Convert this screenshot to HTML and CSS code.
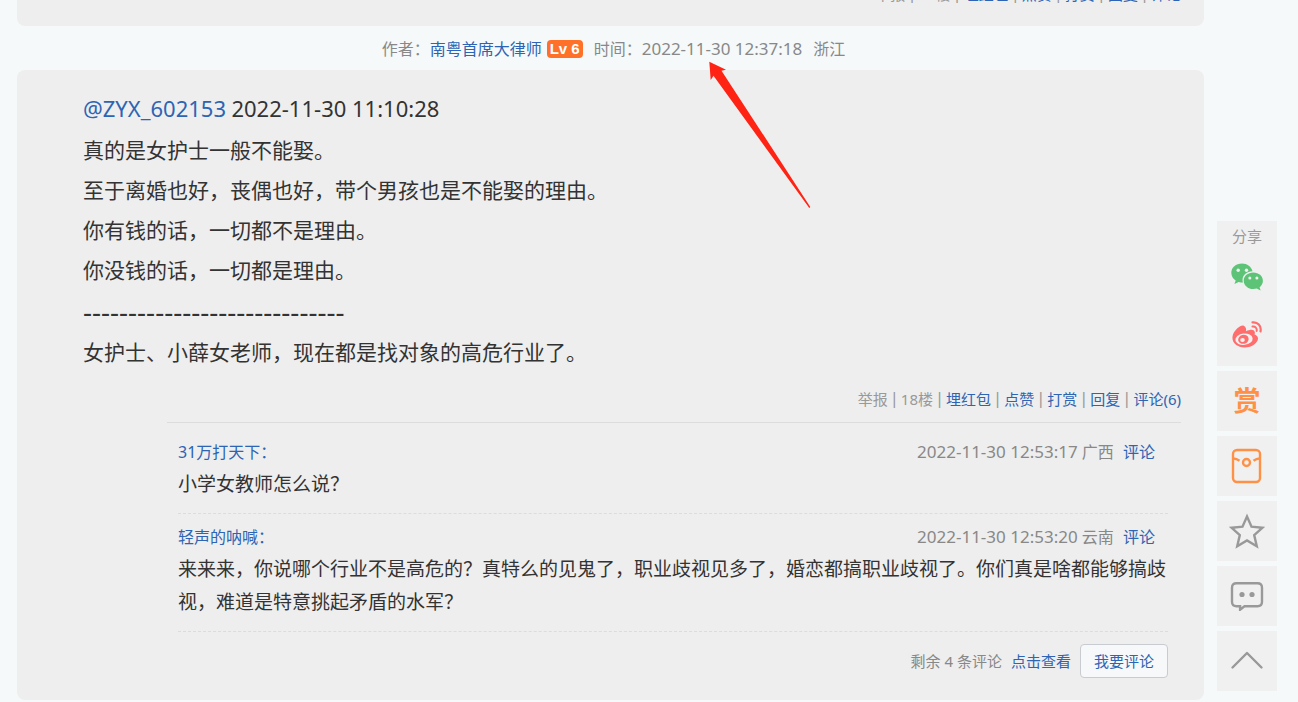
FILE: index.html
```html
<!DOCTYPE html>
<html lang="zh-CN">
<head>
<meta charset="utf-8">
<title>帖子</title>
<link rel="stylesheet" href="styles.css">
</head>
<body>
<div class="page">
  <main class="thread">
    <section class="card card-prev">
      <div class="actions">
        <span class="muted">举报</span><i>|</i><span class="muted">17楼</span><i>|</i><a href="#">埋红包</a><i>|</i><a href="#">点赞</a><i>|</i><a href="#">打赏</a><i>|</i><a href="#">回复</a><i>|</i><a href="#">评论</a>
      </div>
    </section>

    <div class="author">
      <span>作者：<a href="#">南粤首席大律师</a></span>
      <span class="level">Lv 6</span>
      <span class="posted">时间：<time>2022-11-30 12:37:18</time></span>
      <span class="region">浙江</span>
    </div>

    <article class="card">
      <div class="post">
        <p><a class="latin" href="#">@ZYX_602153</a> <time>2022-11-30 11:10:28</time></p>
        <p>真的是女护士一般不能娶。<br>至于离婚也好，丧偶也好，带个男孩也是不能娶的理由。<br>你有钱的话，一切都不是理由。<br>你没钱的话，一切都是理由。</p>
        <p class="dashes">-----------------------------</p>
        <p>女护士、小薛女老师，现在都是找对象的高危行业了。</p>
      </div>
      <div class="actions">
        <span class="muted">举报</span><i>|</i><span class="muted">18楼</span><i>|</i><a href="#">埋红包</a><i>|</i><a href="#">点赞</a><i>|</i><a href="#">打赏</a><i>|</i><a href="#">回复</a><i>|</i><a href="#">评论(6)</a>
      </div>
      <div class="comments">
        <div class="comment">
          <div class="comment-head">
            <a href="#">31万打天下：</a>
            <span class="comment-info"><time>2022-11-30 12:53:17</time> 广西 <a class="reply" href="#">评论</a></span>
          </div>
          <p>小学女教师怎么说？</p>
        </div>
        <div class="comment">
          <div class="comment-head">
            <a href="#">轻声的呐喊：</a>
            <span class="comment-info"><time>2022-11-30 12:53:20</time> 云南 <a class="reply" href="#">评论</a></span>
          </div>
          <p>来来来，你说哪个行业不是高危的？真特么的见鬼了，职业歧视见多了，婚恋都搞职业歧视了。你们真是啥都能够搞歧视，难道是特意挑起矛盾的水军？</p>
        </div>
        <div class="comments-foot">
          <span>剩余 4 条评论</span>
          <a href="#">点击查看</a>
          <button type="button" class="write">我要评论</button>
        </div>
      </div>
    </article>
  </main>

  <aside class="tools">
    <div class="share">
      <span>分享</span>
      <button type="button" aria-label="微信">
        <svg width="32" height="28" viewBox="0 0 32 28">
          <path fill="#5dc477" d="M11 0.500C4.900 0.500 0.300 4.500 0.300 9.800c0 3.200 1.700 5.900 4.400 7.700L3.400 21l4.300-2.100c1.400.4 2.800.6 4.200.6A9.500 9.500 0 0 1 11.500 17c0-5 4.500-8.700 10-8.800C20.500 3.800 16.200.5 11 .5z"/>
          <path fill="#5dc477" d="M22.300 9.500c-5.400 0-9.600 3.600-9.600 8.200s4.200 8.300 9.600 8.300c1.200 0 2.400-.2 3.400-.5l3.900 2-1-3.300c2.100-1.600 3.300-3.900 3.300-6.500 0-4.600-4.200-8.200-9.600-8.200z"/>
          <g fill="#f0f0f0"><circle cx="7.200" cy="7.300" r="1.700"/><circle cx="15.500" cy="7.300" r="1.700"/><circle cx="18.800" cy="15" r="1.500"/><circle cx="25.900" cy="15" r="1.500"/></g>
        </svg>
      </button>
      <button type="button" aria-label="微博">
        <svg width="31" height="28" viewBox="0 0 31 28">
          <path fill="#ff6d6d" d="M12 5c-2.500-2-9 3.500-11 8.500C-1.500 21 4.500 26.500 12.500 26.500S26 21.500 26 17.500c0-2.200-1.700-3.300-3.500-4 .8-2.300.3-4.300-2-4.600-1.900-.3-4 .3-6.500 1.300C14.500 7.500 13.500 5.800 12 5z"/>
          <ellipse cx="12" cy="18.200" rx="8.700" ry="5.700" fill="#f0f0f0" transform="rotate(-7 12 18.200)"/>
          <ellipse cx="11.400" cy="18.300" rx="5.300" ry="4.500" fill="#ff6d6d" transform="rotate(-15 11.400 18.300)"/>
          <ellipse cx="10.500" cy="19" rx="2.300" ry="1.900" fill="#f0f0f0"/>
          <g fill="none" stroke="#ff6d6d" stroke-linecap="round"><path stroke-width="2.200" d="M20.500 1.400c5-.8 9.200 3.600 8 9"/><path stroke-width="2" d="M20.500 5.600c2.800-.4 4.700 1.700 4.200 4.300"/></g>
        </svg>
      </button>
    </div>
    <button type="button" class="tool reward">赏</button>
    <button type="button" class="tool" aria-label="红包">
      <svg width="32" height="36" viewBox="0 0 32 36" fill="none" stroke="#ff9147" stroke-width="2.400">
        <rect x="2" y="2" width="27" height="32" rx="4"/><circle cx="15.500" cy="14.500" r="3.500"/><path d="M2.500 10.500q3 0 6 2.300M28.500 10.500q-3 0-6 2.300"/>
      </svg>
    </button>
    <button type="button" class="tool" aria-label="收藏">
      <svg width="36" height="36" viewBox="0 0 36 36" fill="none" stroke="#999" stroke-width="2.400">
        <path d="M18 3.500l4.500 10.200 11 1-8.300 7.400 2.600 11.200-9.800-5.800-9.800 5.800 2.600-11.200-8.300-7.400 11-1z"/>
      </svg>
    </button>
    <button type="button" class="tool" aria-label="评论">
      <svg width="34" height="30" viewBox="0 0 34 30">
        <path fill="none" stroke="#999" stroke-width="2.400" d="M6.500 2.200h21q4.500 0 4.500 4.500v14q0 4.500-4.500 4.500h-13l-4.400 3.500v-3.500H6.500Q2 25.200 2 20.700v-14q0-4.500 4.500-4.500z"/>
        <circle cx="12" cy="13.500" r="2.600" fill="#999"/><circle cx="22" cy="13.500" r="2.600" fill="#999"/>
      </svg>
    </button>
    <button type="button" class="tool" aria-label="返回顶部">
      <svg width="34" height="20" viewBox="0 0 34 20" fill="none" stroke="#999" stroke-width="2.400" stroke-linecap="round" stroke-linejoin="round"><path d="M2.500 16.500L17 2l14.500 14.500"/></svg>
    </button>
  </aside>
</div>
<svg class="arrow" width="102" height="148" viewBox="0 0 102 148" aria-hidden="true"><path fill="#ff2314" d="M.3.7L17 8.700l-4.500 1L101.300 146l-1 .9L4.500 14.700 1.700 19z"/></svg>
</body>
</html>
```
FILE: styles.css
```css
* { box-sizing: border-box; }
body {
  margin: 0;
  background: #f5f9fa;
  color: #333;
  font: 16px/24px "Noto Sans", "Noto Sans CJK SC", sans-serif;
}
p { margin: 0; }
a { color: #2d64b3; text-decoration: none; }
button { font: inherit; cursor: pointer; }
svg { display: block; }

.page {
  display: flex;
  gap: 13px;
  padding: 0 21px 0 17px;
}
.thread { flex: 1; min-width: 0; }

.card {
  background: #eee;
  border-radius: 8px;
  padding: 18px 23px 22px 66px;
}
.card-prev {
  display: flex;
  align-items: flex-end;
  justify-content: flex-end;
  height: 26px;
  padding: 0 23px 20px;
  border-radius: 0 0 8px 8px;
  overflow: hidden;
}

.author {
  display: flex;
  align-items: center;
  justify-content: center;
  height: 44px;
  padding: 2px 0 0 6px;
  color: #888;
}
.author time, .comment-info time { font-size: 17px; }
.level {
  margin-left: 5px;
  padding: 0 3px;
  border-radius: 4px;
  background: #ff7129;
  color: #fff;
  font: bold 15px/18px "Liberation Sans", sans-serif;
}
.posted { margin-left: 11px; }
.region { margin-left: 11px; }

.post {
  display: flex;
  flex-direction: column;
  gap: 1px;
  font-size: 21px;
  line-height: 40px;
}
.post time, .latin { font-size: 22px; }
.dashes { font-size: 28px; }

.actions {
  display: flex;
  justify-content: flex-end;
  gap: 4px;
  font-size: 15px;
  color: #999;
  white-space: nowrap;
}
.actions i { font-family: "DejaVu Sans", sans-serif; font-style: normal; }
.post + .actions { margin-top: 15px; }

.comments {
  margin: 11px 0 0 84px;
  padding: 6px 13px 0 11px;
  border-top: 1px solid #dcdcdc;
}
.comment {
  padding: 7px 0 12px;
  border-bottom: 1px dashed #dcdcdc;
  font-size: 19px;
  line-height: 33px;
}
.comment-head {
  display: flex;
  justify-content: space-between;
  padding-right: 13px;
  font-size: 16px;
  line-height: 32px;
}
.comment-info { color: #888; }
.reply { margin-left: 5px; }

.comments-foot {
  display: flex;
  align-items: center;
  justify-content: flex-end;
  gap: 9px;
  padding-top: 12px;
  color: #888;
  font-size: 15px;
}
.write {
  height: 34px;
  padding: 0 13px;
  border: 1px solid #c8cbcf;
  border-radius: 4px;
  background: #f7f8fa;
  color: #2d64b3;
}

.tools {
  display: flex;
  flex-direction: column;
  gap: 5px;
  width: 60px;
  padding-top: 221px;
}
.share {
  display: flex;
  flex-direction: column;
  align-items: center;
  height: 145px;
  padding-top: 3px;
  background: #f0f0f0;
  color: #999;
  font-size: 15px;
}
.share button {
  display: flex;
  align-items: center;
  justify-content: center;
  width: 60px;
  height: 58px;
  padding: 0;
  border: 0;
  background: none;
}
.tool {
  display: flex;
  align-items: center;
  justify-content: center;
  height: 60px;
  padding: 0;
  border: 0;
  background: #f0f0f0;
}
.reward { color: #ff9147; font-size: 27px; font-weight: 700; }

.arrow {
  position: absolute;
  left: 709px;
  top: 61px;
  pointer-events: none;
}
```
